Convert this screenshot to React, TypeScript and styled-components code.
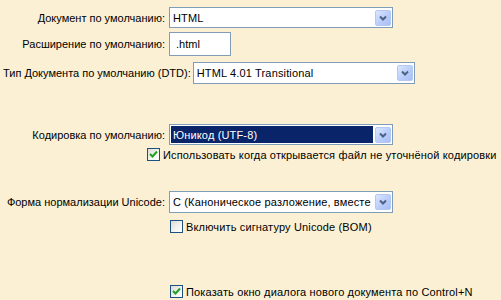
import React from 'react';
import styled, {createGlobalStyle} from 'styled-components';

const GlobalStyle = createGlobalStyle`
    body {
        margin: 0;
        background: #fbf0d4;
        font-family: "Liberation Sans", Arial, sans-serif;
        font-size: 11px;
        color: #000;
    }
`

const Page = styled.div`
    display: flex;
    flex-direction: column;
    width: 501px;
    height: 300px;
    overflow: hidden;
`

type RowProps = {
    top: number
    left?: number
}

const Row = styled.div<RowProps>`
    display: flex;
    align-items: center;
    margin-top: ${props => props.top}px;
    padding-left: ${props => props.left || 0}px;
    white-space: nowrap;
`

type LabelProps = {
    w?: number
}

const Label = styled.div<LabelProps>`
    width: ${props => props.w ? props.w + 'px' : 'auto'};
    text-align: right;
    margin-right: ${props => props.w ? 4 : 2}px;
    flex-shrink: 0;
`

type BoxProps = {
    width: number
    height: number
}

const SelectBox = styled.div<BoxProps>`
    display: flex;
    align-items: center;
    box-sizing: border-box;
    width: ${props => props.width}px;
    height: ${props => props.height}px;
    border: 1px solid #7f9db9;
    background: #fff;
    padding: 1px;
    gap: 2px;
`

type ValueProps = {
    selected?: boolean
}

const Value = styled.div<ValueProps>`
    flex: 1;
    align-self: stretch;
    display: flex;
    align-items: center;
    padding-left: 2px;
    overflow: hidden;
    white-space: nowrap;
    letter-spacing: 0.15px;
    background: ${props => props.selected ? '#0a246a' : 'transparent'};
    color: ${props => props.selected ? '#fff' : '#000'};
`

const Arrow = styled.div`
    display: flex;
    align-items: center;
    justify-content: center;
    flex-shrink: 0;
    box-sizing: border-box;
    width: 16px;
    height: 16px;
    border: 1px solid #b4c8f4;
    border-radius: 2px;
    background: linear-gradient(135deg, #dce7fe 0%, #b9cdfb 55%, #a8bff6 100%);
`

const TextInput = styled.div<BoxProps>`
    display: flex;
    align-items: center;
    box-sizing: border-box;
    width: ${props => props.width}px;
    height: ${props => props.height}px;
    border: 1px solid #7f9db9;
    background: #fff;
    padding-left: 6px;
`

const CheckRow = styled(Row)`
    gap: 3px;
    letter-spacing: 0.15px;
`

const Box = styled.div`
    display: flex;
    align-items: center;
    justify-content: center;
    box-sizing: border-box;
    width: 13px;
    height: 13px;
    flex-shrink: 0;
    border: 1px solid #1c5180;
    background: linear-gradient(135deg, #dcdcd7 0%, #f4f4f0 60%, #fff 100%);
`

const Chevron = () => (
    <svg width="8" height="6" viewBox="0 0 8 6">
        <path d="M1 1.5 L4 4.5 L7 1.5" fill="none" stroke="#4d6185" strokeWidth="2"/>
    </svg>
)

const Tick = () => (
    <svg width="9" height="9" viewBox="0 0 9 9">
        <path d="M1 4 L3.5 6.5 L8 1.5" fill="none" stroke="#21a121" strokeWidth="2"/>
    </svg>
)

type SelectProps = {
    value: string
    width: number
    height: number
    selected?: boolean
}

const Select = ({value, width, height, selected}: SelectProps) => (
    <SelectBox width={width} height={height}>
        <Value selected={selected}>{value}</Value>
        <Arrow><Chevron/></Arrow>
    </SelectBox>
)

type CheckProps = {
    checked?: boolean
    text: string
    left: number
    top: number
}

const Check = ({checked, text, left, top}: CheckProps) => (
    <CheckRow top={top} left={left}>
        <Box>{checked && <Tick/>}</Box>
        <span>{text}</span>
    </CheckRow>
)

export default function App() {
    return (
        <Page>
            <GlobalStyle/>
            <Row top={7}>
                <Label w={165}>Документ по умолчанию:</Label>
                <Select value="HTML" width={224} height={21}/>
            </Row>
            <Row top={4}>
                <Label w={165}>Расширение по умолчанию:</Label>
                <TextInput width={62} height={24}>.html</TextInput>
            </Row>
            <Row top={6} left={3}>
                <Label>Тип Документа по умолчанию (DTD):</Label>
                <Select value="HTML 4.01 Transitional" width={222} height={22}/>
            </Row>
            <Row top={40}>
                <Label w={165}>Кодировка по умолчанию:</Label>
                <Select value="Юникод (UTF-8)" width={224} height={21} selected/>
            </Row>
            <Check checked top={3} left={147}
                   text="Использовать когда открывается файл не уточнёной кодировки"/>
            <Row top={30}>
                <Label w={165}>Форма нормализации Unicode:</Label>
                <Select value="C (Каноническое разложение, вместе с последующим каноническим составлением)"
                        width={224} height={22}/>
            </Row>
            <Check top={7} left={170} text="Включить сигнатуру Unicode (BOM)"/>
            <Check checked top={52} left={170}
                   text="Показать окно диалога нового документа по Control+N"/>
        </Page>
    );
}
